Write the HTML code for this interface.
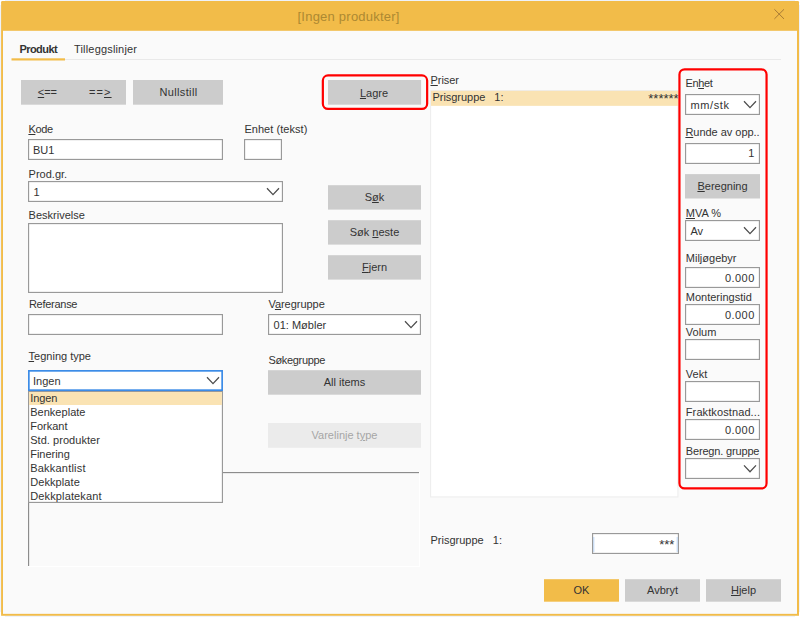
<!DOCTYPE html>
<html><head><meta charset="utf-8"><title>[Ingen produkter]</title>
<style>
html,body{margin:0;padding:0;}
body{width:800px;height:617px;overflow:hidden;background:#EEF2FA;font-family:"Liberation Sans",sans-serif;position:relative;}
svg{position:absolute;left:0;top:0;}
.t{position:absolute;white-space:pre;}
.t u{text-decoration:underline;text-underline-offset:1px;text-decoration-thickness:1px;}
</style></head><body>
<svg width="800" height="617" viewBox="0 0 800 617">
<!-- window frame + title bar -->
<path d="M0,0 H5 V1.2 H1.2 V5 H0 Z M800,0 H795 V1.2 H798.9 V5 H800 Z M0,617 V612 H1.2 V615.8 H5 V617 Z M800,617 V612 H798.9 V615.8 H795 V617 Z" fill="#fff"/>
<path d="M1.1,615.85 V2.3 a1.3,1.3 0 0 1 1.3,-1.3 H797.7 a1.3,1.3 0 0 1 1.3,1.3 V615.85 Z" fill="#F2BC49"/>
<rect x="3" y="30.8" width="794" height="583.05" fill="#FAFAFA"/>
<path d="M774.4,9.3 L784,18.9 M784,9.3 L774.4,18.9" stroke="#9A6E30" stroke-width="0.85" fill="none"/>
<rect x="12" y="59" width="769" height="1" fill="#E9E9E9"/>
<rect x="11.5" y="58.3" width="53.5" height="2.2" fill="#F2BC49"/>
<rect x="430.575" y="90.575" width="247.35" height="406.35" fill="#fff" stroke="#EEEEEE" stroke-width="1.15"/>
<rect x="431" y="90.85" width="247.3" height="15" fill="#FAE3B3"/>
<rect x="28" y="472" width="391" height="1.15" fill="#8C8C8C"/>
<rect x="28" y="472" width="1.15" height="94" fill="#8C8C8C"/>
<rect x="419" y="472" width="1.1" height="95" fill="#fff"/>
<rect x="28" y="566" width="392.1" height="1.1" fill="#fff"/>
<rect x="21" y="80" width="105" height="24.7" fill="#CCCCCC"/>
<rect x="133" y="80" width="90" height="24.7" fill="#CCCCCC"/>
<rect x="328" y="80" width="93.1" height="24.7" fill="#CCCCCC"/>
<rect x="328" y="185.2" width="93" height="24.4" fill="#CCCCCC"/>
<rect x="328" y="220.2" width="93" height="24.4" fill="#CCCCCC"/>
<rect x="328" y="255.2" width="93" height="24.4" fill="#CCCCCC"/>
<rect x="268" y="370.2" width="153" height="24.5" fill="#CCCCCC"/>
<rect x="685" y="174.1" width="75" height="24.4" fill="#CCCCCC"/>
<rect x="625" y="579.2" width="75" height="22.5" fill="#CCCCCC"/>
<rect x="706" y="579.2" width="75" height="22.5" fill="#CCCCCC"/>
<rect x="268" y="423" width="153" height="24.8" fill="#EBEBEB"/>
<rect x="544" y="579.2" width="75" height="22.5" fill="#F2BC49"/>
<rect x="28.575" y="139.575" width="193.85" height="19.85" fill="#fff" stroke="#999999" stroke-width="1.15"/>
<rect x="244.575" y="139.575" width="36.85" height="19.85" fill="#fff" stroke="#999999" stroke-width="1.15"/>
<rect x="28.575" y="181.575" width="253.85" height="19.85" fill="#fff" stroke="#999999" stroke-width="1.15"/>
<rect x="28.575" y="223.575" width="253.85" height="68.85" fill="#fff" stroke="#999999" stroke-width="1.15"/>
<rect x="28.575" y="314.575" width="193.85" height="19.85" fill="#fff" stroke="#999999" stroke-width="1.15"/>
<rect x="268.575" y="314.575" width="151.85" height="19.85" fill="#fff" stroke="#999999" stroke-width="1.15"/>
<rect x="685.575" y="94.575" width="73.85" height="19.85" fill="#fff" stroke="#999999" stroke-width="1.15"/>
<rect x="685.575" y="143.575" width="73.85" height="19.85" fill="#fff" stroke="#999999" stroke-width="1.15"/>
<rect x="685.575" y="220.575" width="73.85" height="19.85" fill="#fff" stroke="#999999" stroke-width="1.15"/>
<rect x="685.575" y="267.575" width="73.85" height="19.85" fill="#fff" stroke="#999999" stroke-width="1.15"/>
<rect x="685.575" y="304.575" width="73.85" height="19.85" fill="#fff" stroke="#999999" stroke-width="1.15"/>
<rect x="685.575" y="339.575" width="73.85" height="19.85" fill="#fff" stroke="#999999" stroke-width="1.15"/>
<rect x="685.575" y="381.575" width="73.85" height="19.85" fill="#fff" stroke="#999999" stroke-width="1.15"/>
<rect x="685.575" y="419.575" width="73.85" height="19.85" fill="#fff" stroke="#999999" stroke-width="1.15"/>
<rect x="685.575" y="458.575" width="73.85" height="19.85" fill="#fff" stroke="#999999" stroke-width="1.15"/>
<rect x="592.575" y="533.575" width="85.85" height="19.85" fill="#fff" stroke="#999999" stroke-width="1.15"/>
<rect x="593.3" y="537" width="1" height="15" fill="#B9D3F3"/>
<rect x="676.7" y="537" width="1" height="15" fill="#B9D3F3"/>
<polyline points="267,188.2 273,194.6 279,188.2" fill="none" stroke="#4d4d4d" stroke-width="1.25"/>
<polyline points="405,321.2 411,327.6 417,321.2" fill="none" stroke="#4d4d4d" stroke-width="1.25"/>
<polyline points="744,101.3 750,107.7 756,101.3" fill="none" stroke="#4d4d4d" stroke-width="1.25"/>
<polyline points="744,227.2 750,233.6 756,227.2" fill="none" stroke="#4d4d4d" stroke-width="1.25"/>
<polyline points="744,465.4 750,471.8 756,465.4" fill="none" stroke="#4d4d4d" stroke-width="1.25"/>
<rect x="28.85" y="370.85" width="193.3" height="19.3" fill="#fff" stroke="#3C8CE7" stroke-width="1.7"/>
<polyline points="207,377.2 213,383.6 219,377.2" fill="none" stroke="#4d4d4d" stroke-width="1.25"/>
<rect x="28.575" y="391.575" width="193.85" height="110.85" fill="#fff" stroke="#999999" stroke-width="1.15"/>
<rect x="29.1" y="392.1" width="192.8" height="12.9" fill="#FAE3B3"/>
</svg>
<span class="t" style="top:8.5px;font-size:13px;line-height:16px;color:#AD8932;letter-spacing:0.231px;left:297.5px;">[Ingen produkter]</span>
<span class="t" style="top:42px;font-size:11px;line-height:14px;color:#333333;font-weight:bold;letter-spacing:-0.535px;left:19.4px;">Produkt</span>
<span class="t" style="top:42px;font-size:11px;line-height:14px;color:#333333;letter-spacing:0.174px;left:74px;">Tilleggslinjer</span>
<span class="t" style="top:122px;font-size:11px;line-height:14px;color:#333333;letter-spacing:-0.334px;left:28.4px;"><u>K</u>ode</span>
<span class="t" style="top:122px;font-size:11px;line-height:14px;color:#333333;letter-spacing:0.053px;left:244.4px;">Enhet (tekst)</span>
<span class="t" style="top:167px;font-size:11px;line-height:14px;color:#333333;left:28.6px;">Prod.gr.</span>
<span class="t" style="top:208px;font-size:11px;line-height:14px;color:#333333;left:28.6px;">Beskrivelse</span>
<span class="t" style="top:297px;font-size:11px;line-height:14px;color:#333333;letter-spacing:-0.271px;left:28.9px;">Referanse</span>
<span class="t" style="top:349px;font-size:11px;line-height:14px;color:#333333;left:28.6px;"><u>T</u>egning type</span>
<span class="t" style="top:297px;font-size:11px;line-height:14px;color:#333333;letter-spacing:-0.03px;left:268.4px;">V<u>a</u>regruppe</span>
<span class="t" style="top:353px;font-size:11px;line-height:14px;color:#333333;letter-spacing:-0.326px;left:268.4px;">Søke<u>g</u>ruppe</span>
<span class="t" style="top:73px;font-size:11px;line-height:14px;color:#333333;letter-spacing:-0.047px;left:430.5px;"><u>P</u>riser</span>
<span class="t" style="top:90px;font-size:11px;line-height:14px;color:#333333;letter-spacing:-0.039px;left:432.5px;">Prisgruppe   1:</span>
<span class="t" style="top:533px;font-size:11px;line-height:14px;color:#333333;letter-spacing:-0.003px;left:430.5px;">Prisgruppe   1:</span>
<span class="t" style="top:76px;font-size:11px;line-height:14px;color:#333333;letter-spacing:-0.412px;left:685.6px;">En<u>h</u>et</span>
<span class="t" style="top:125px;font-size:11px;line-height:14px;color:#333333;letter-spacing:-0.025px;left:685.4px;"><u>R</u>unde av opp..</span>
<span class="t" style="top:206px;font-size:11px;line-height:14px;color:#333333;left:685.8px;"><u>M</u>VA %</span>
<span class="t" style="top:251px;font-size:11px;line-height:14px;color:#333333;left:685.8px;">Miljøgebyr</span>
<span class="t" style="top:290px;font-size:11px;line-height:14px;color:#333333;left:685.8px;">Monteringstid</span>
<span class="t" style="top:325px;font-size:11px;line-height:14px;color:#333333;left:685.8px;">Volum</span>
<span class="t" style="top:367px;font-size:11px;line-height:14px;color:#333333;left:685.8px;">Vekt</span>
<span class="t" style="top:405px;font-size:11px;line-height:14px;color:#333333;letter-spacing:0.102px;left:685.8px;">Fraktkostnad...</span>
<span class="t" style="top:444px;font-size:11px;line-height:14px;color:#333333;letter-spacing:-0.165px;left:685.8px;">Beregn. gruppe</span>
<span class="t" style="top:143px;font-size:11px;line-height:14px;color:#333333;left:33px;">BU1</span>
<span class="t" style="top:185px;font-size:11px;line-height:14px;color:#333333;left:33.5px;">1</span>
<span class="t" style="top:318px;font-size:11px;line-height:14px;color:#333333;left:273.6px;">01: Møbler</span>
<span class="t" style="top:374px;font-size:11px;line-height:14px;color:#333333;left:33px;">Ingen</span>
<span class="t" style="top:98px;font-size:11px;line-height:14px;color:#333333;letter-spacing:0.569px;left:690.6px;">mm/stk</span>
<span class="t" style="top:224px;font-size:11px;line-height:14px;color:#333333;left:690.4px;">Av</span>
<span class="t" style="top:146px;font-size:11px;line-height:14px;color:#333333;right:45.7px;">1</span>
<span class="t" style="top:271px;font-size:11px;line-height:14px;color:#333333;letter-spacing:0.467px;left:724.9px;">0.000</span>
<span class="t" style="top:308px;font-size:11px;line-height:14px;color:#333333;letter-spacing:0.467px;left:724.9px;">0.000</span>
<span class="t" style="top:423px;font-size:11px;line-height:14px;color:#333333;letter-spacing:0.467px;left:724.9px;">0.000</span>
<span class="t" style="top:536.5px;font-size:13px;line-height:16px;color:#333333;right:125.7px;">***</span>
<span class="t clipstar" style="top:90.5px;font-size:13px;line-height:16px;color:#333333;left:648.3px;">******</span>
<span class="t" style="top:391px;font-size:11px;line-height:14px;color:#333333;letter-spacing:-0.083px;left:30.2px;">Ingen</span>
<span class="t" style="top:405px;font-size:11px;line-height:14px;color:#333333;letter-spacing:0.028px;left:30.2px;">Benkeplate</span>
<span class="t" style="top:419px;font-size:11px;line-height:14px;color:#333333;letter-spacing:0.001px;left:30.2px;">Forkant</span>
<span class="t" style="top:433px;font-size:11px;line-height:14px;color:#333333;letter-spacing:0.047px;left:30.2px;">Std. produkter</span>
<span class="t" style="top:447px;font-size:11px;line-height:14px;color:#333333;letter-spacing:-0.021px;left:30.2px;">Finering</span>
<span class="t" style="top:461px;font-size:11px;line-height:14px;color:#333333;letter-spacing:0.21px;left:30.2px;">Bakkantlist</span>
<span class="t" style="top:475px;font-size:11px;line-height:14px;color:#333333;letter-spacing:0.085px;left:30.2px;">Dekkplate</span>
<span class="t" style="top:489px;font-size:11px;line-height:14px;color:#333333;letter-spacing:0.14px;left:30.2px;">Dekkplatekant</span>
<span class="t" style="top:85px;font-size:11px;line-height:14px;color:#333333;left:47.4px;transform:translateX(-50%);"><u>&lt;</u>==</span>
<span class="t" style="top:85px;font-size:11px;line-height:14px;color:#333333;letter-spacing:1.109px;left:88.95px;">==<u>&gt;</u></span>
<span class="t" style="top:85px;font-size:11px;line-height:14px;color:#333333;letter-spacing:0.357px;left:159.45px;">Nullstill</span>
<span class="t" style="top:86px;font-size:11px;line-height:14px;color:#333333;left:374px;transform:translateX(-50%);"><u>L</u>agre</span>
<span class="t" style="top:190px;font-size:11px;line-height:14px;color:#333333;left:374.5px;transform:translateX(-50%);">S<u>ø</u>k</span>
<span class="t" style="top:225px;font-size:11px;line-height:14px;color:#333333;left:374.5px;transform:translateX(-50%);">Søk <u>n</u>este</span>
<span class="t" style="top:260px;font-size:11px;line-height:14px;color:#333333;left:374.5px;transform:translateX(-50%);"><u>F</u>jern</span>
<span class="t" style="top:375px;font-size:11px;line-height:14px;color:#333333;left:344.5px;transform:translateX(-50%);">All items</span>
<span class="t" style="top:428px;font-size:11px;line-height:14px;color:#A6A6A6;left:344.5px;transform:translateX(-50%);">Varelinje t<u>y</u>pe</span>
<span class="t" style="top:179px;font-size:11px;line-height:14px;color:#333333;left:722.5px;transform:translateX(-50%);"><u>B</u>eregning</span>
<span class="t" style="top:583px;font-size:11px;line-height:14px;color:#333333;left:581.5px;transform:translateX(-50%);">OK</span>
<span class="t" style="top:583px;font-size:11px;line-height:14px;color:#333333;left:662.5px;transform:translateX(-50%);">Avbryt</span>
<span class="t" style="top:583px;font-size:11px;line-height:14px;color:#333333;left:743.5px;transform:translateX(-50%);"><u>H</u>jelp</span>
<svg width="800" height="617" viewBox="0 0 800 617">
<rect x="322.85" y="75.4" width="104.3" height="33.5" rx="5.2" fill="none" stroke="#FF0000" stroke-width="2.2"/>
<rect x="679.45" y="69.3" width="87.1" height="419.1" rx="5.2" fill="none" stroke="#FF0000" stroke-width="2.2"/>
</svg>
</body></html>
